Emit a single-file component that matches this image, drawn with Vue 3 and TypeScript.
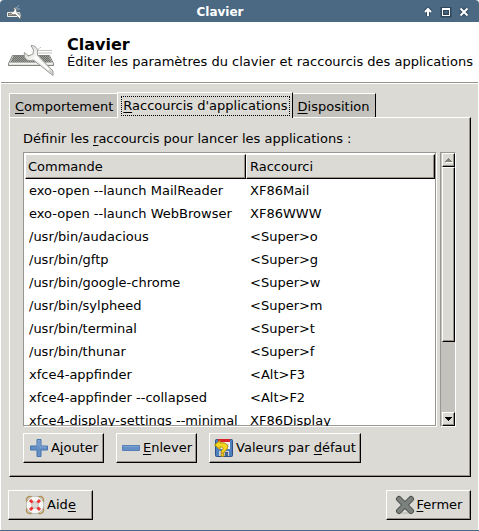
<script setup lang="ts">
import { ref } from 'vue'

interface Shortcut {
  command: string
  keys: string
}

interface Tab {
  id: string
  key: string
  rest: string
}

const tabs: Tab[] = [
  { id: 'behaviour', key: 'C', rest: 'omportement' },
  { id: 'shortcuts', key: 'R', rest: "accourcis d'applications" },
  { id: 'layout', key: 'D', rest: 'isposition' },
]

const activeTab = ref('shortcuts')

const shortcuts: Shortcut[] = [
  { command: 'exo-open --launch MailReader', keys: 'XF86Mail' },
  { command: 'exo-open --launch WebBrowser', keys: 'XF86WWW' },
  { command: '/usr/bin/audacious', keys: '<Super>o' },
  { command: '/usr/bin/gftp', keys: '<Super>g' },
  { command: '/usr/bin/google-chrome', keys: '<Super>w' },
  { command: '/usr/bin/sylpheed', keys: '<Super>m' },
  { command: '/usr/bin/terminal', keys: '<Super>t' },
  { command: '/usr/bin/thunar', keys: '<Super>f' },
  { command: 'xfce4-appfinder', keys: '<Alt>F3' },
  { command: 'xfce4-appfinder --collapsed', keys: '<Alt>F2' },
  { command: 'xfce4-display-settings --minimal', keys: 'XF86Display' },
]
</script>

<template>
  <div class="window">
    <header class="titlebar">
      <svg class="title-icon" viewBox="0 0 16 16" aria-hidden="true">
        <path d="M1.500 8.500h12l1 4h-13z" fill="#77756e" stroke="#eeeeea" />
        <path d="M3 10.500h9" stroke="#b4b3ac" />
        <path d="M9 4c2 0 2-1 4-2.500M10 5h4" fill="none" stroke="#9fb0be" />
        <path d="M7 3.500l3 1 1 4 3.500 3.500v3.500l-5-5-3.500 0-2-3.500 3 1 1.500-2z" fill="#fff" stroke="#4c4a44" stroke-width="0.500" />
      </svg>
      <span class="title">Clavier</span>
      <div class="window-buttons">
        <button type="button" aria-label="Enrouler">
          <svg viewBox="0 0 12 12"><path class="halo" d="M6 10V3M3 6l3-3 3 3" /><path class="glyph" d="M6 10V3M3 6l3-3 3 3" /></svg>
        </button>
        <button type="button" aria-label="Agrandir">
          <svg viewBox="0 0 12 12"><path class="halo" d="M2.500 3h7v6.500h-7z" /><path class="frame" d="M2 2h8v8H2zM3 4v5h6V4z" /></svg>
        </button>
        <button type="button" aria-label="Fermer la fenêtre">
          <svg viewBox="0 0 12 12"><path class="halo" d="M2.500 2.500l7 7M9.500 2.500l-7 7" /><path class="glyph" d="M2.500 2.500l7 7M9.500 2.500l-7 7" /></svg>
        </button>
      </div>
    </header>

    <section class="heading">
      <svg class="heading-icon" viewBox="0 -14 48 48" aria-hidden="true">
        <defs>
          <pattern id="keys" width="2" height="2" patternUnits="userSpaceOnUse">
            <rect width="2" height="2" fill="#6e706c" />
            <rect width="1" height="1" fill="#a2a49f" />
            <rect x="1" y="1" width="1" height="1" fill="#979994" />
          </pattern>
          <linearGradient id="steel" x1="0" y1="0" x2="1" y2="1">
            <stop offset="0" stop-color="#cfd0cc" />
            <stop offset="0.4" stop-color="#f7f7f5" />
            <stop offset="1" stop-color="#cfd0cc" />
          </linearGradient>
        </defs>
        <path d="M4.500 12.500h37l4 8v2h-45v-2z" fill="#e4e5e1" stroke="#80827e" />
        <path d="M5.500 13h35.500l3 6.500H2z" fill="url(#keys)" />
        <path d="M2 20.500h42" stroke="#f4f4f2" />
        <path d="M28 6.500c3 1 3-2.500 5-2M30 7.500h14M30 10h14" fill="none" stroke="#c2c3bf" />
        <path d="M23 2.500c4-.5 7 3 6.500 7l0 2.500L45 28v4.500L26 17.500c-1.500-1-3 .5-5 0-3.500-.5-5.500-4-4.500-8l4 3.500 4.500-2 .5-4z" fill="url(#steel)" stroke="#9b9c98" />
        <path d="M27 14l14 13" fill="none" stroke="#fff" stroke-width="2" />
      </svg>
      <div class="heading-text">
        <h1>Clavier</h1>
        <p>Éditer les paramètres du clavier et raccourcis des applications</p>
      </div>
    </section>

    <main class="body">
      <nav class="tabs" role="tablist">
        <button
          v-for="tab in tabs"
          :key="tab.id"
          type="button"
          role="tab"
          class="tab"
          :class="{ active: tab.id === activeTab }"
          :aria-selected="tab.id === activeTab"
          @click="activeTab = tab.id"
        >
          <span class="tab-label"><u>{{ tab.key }}</u>{{ tab.rest }}</span>
        </button>
      </nav>

      <section class="panel">
        <p class="caption">Définir les <u>r</u>accourcis pour lancer les applications :</p>

        <div class="list">
          <div class="list-view">
            <table>
              <thead>
                <tr>
                  <th class="command">Commande</th>
                  <th>Raccourci</th>
                </tr>
              </thead>
              <tbody>
                <tr v-for="item in shortcuts" :key="item.command">
                  <td>{{ item.command }}</td>
                  <td>{{ item.keys }}</td>
                </tr>
              </tbody>
            </table>
          </div>
          <div class="scrollbar">
            <button type="button" class="step" aria-label="Défiler vers le haut" disabled>
              <svg viewBox="0 0 9 6"><path d="M2 5h7v1H2z" fill="#fff" /><path d="M4 1h1v1h1v1h1v1h1v1H1V4h1V3h1V2h1z" fill="#85827c" /></svg>
            </button>
            <div class="thumb"></div>
            <div class="trough"></div>
            <button type="button" class="step" aria-label="Défiler vers le bas">
              <svg viewBox="0 0 9 6"><path d="M1 1h7v1H7v1H6v1H5v1H4V4H3V3H2V2H1z" fill="#000" /></svg>
            </button>
          </div>
        </div>

        <div class="actions">
          <button type="button" class="button">
            <svg class="icon" viewBox="0 0 20 20" aria-hidden="true">
              <path d="M8 1.500h4v6.500h6.500v4H12v6.500H8V12H1.500V8H8z" fill="#6490c6" stroke="#4473ad" />
              <path d="M9 8.500v-6h2v6.500h6.500" fill="none" stroke="#82a6d4" />
            </svg>
            <span>A<u>j</u>outer</span>
          </button>
          <button type="button" class="button">
            <svg class="icon" viewBox="0 0 20 20" aria-hidden="true">
              <path d="M1.500 7.500h17v5h-17z" fill="#6490c6" stroke="#5580b8" />
              <path d="M2.500 8.500h15" stroke="#7da2d2" />
            </svg>
            <span><u>E</u>nlever</span>
          </button>
          <button type="button" class="button">
            <svg class="icon" viewBox="0 0 20 20" aria-hidden="true">
              <rect x="1.500" y="1.500" width="17" height="17" rx="1" fill="#4f7fbd" stroke="#2d5288" />
              <path d="M4 2h12v9H4z" fill="#f4f4f6" />
              <path d="M4 1h12v3H4z" fill="#d8222a" />
              <path d="M6 6.500h9M6 8.500h9" stroke="#c5c8ce" />
              <path d="M5 13h10v5H5z" fill="#c9ced6" />
              <path d="M11 14h3v4h-3z" fill="#46658f" />
              <path d="M.500 7 6 2.500v2.500c6-1 9 2 7 6-1 2-3 2-3 4H7c0-3 2-3 2-4.500S8 9 6 9v2.500z" fill="#f4d51f" stroke="#b08b08" />
              <circle cx="8.500" cy="17" r="1.500" fill="#f4d51f" stroke="#b08b08" />
            </svg>
            <span>Valeurs par <u>d</u>éfaut</span>
          </button>
        </div>
      </section>

      <footer class="footer">
        <button type="button" class="button">
          <svg class="icon" viewBox="0 0 20 20" aria-hidden="true">
            <path d="M7 2C3 .500.500 3 2 7M13 2c4-1.500 6.500 1 5 5M7 18c-4 1.500-6.500-1-5-5M13 18c4 1.500 6.500-1 5-5" fill="none" stroke="#b39255" stroke-width="1.500" />
            <circle cx="10" cy="10" r="6" fill="none" stroke="#9d9d99" stroke-width="6" />
            <circle cx="10" cy="10" r="6" fill="none" stroke="#f6f6f4" stroke-width="5" />
            <path d="M5 5l2.500 2.500M15 5l-2.500 2.500M5 15l2.500-2.500M15 15l-2.500-2.500" stroke="#ef3434" stroke-width="3" />
          </svg>
          <span>Aid<u>e</u></span>
        </button>
        <button type="button" class="button">
          <svg class="icon" viewBox="0 0 20 20" aria-hidden="true">
            <ellipse cx="10" cy="18" rx="8" ry="1" fill="#c5c5c0" />
            <path d="M4 4l12 12M16 4L4 16" stroke="#4b504c" stroke-width="6" stroke-linecap="round" />
            <path d="M4 4l12 12M16 4L4 16" stroke="#7b817d" stroke-width="4" stroke-linecap="round" />
          </svg>
          <span><u>F</u>ermer</span>
        </button>
      </footer>
    </main>
  </div>
</template>

<style>
body {
  margin: 0;
  background: #fff;
}
</style>

<style scoped>
* {
  box-sizing: border-box;
}

.window {
  display: flex;
  flex-direction: column;
  height: 100vh;
  min-height: 400px;
  border-bottom: 1px solid #4b6983;
  font: 13px/16px "DejaVu Sans", sans-serif;
  color: #000;
}

button {
  margin: 0;
  padding: 0;
  border: 0;
  background: none;
  font: inherit;
  color: inherit;
}

u {
  text-decoration: underline;
  text-underline-offset: 2px;
  text-decoration-thickness: 1px;
  text-decoration-skip-ink: none;
}

.titlebar {
  display: flex;
  align-items: center;
  height: 22px;
  padding: 2px 9px 0 6px;
  border-radius: 4px 4px 0 0;
  background: #4b6983;
  color: #fff;
}

.title-icon {
  width: 16px;
  height: 16px;
}

.title {
  flex: 1;
  padding-right: 4px;
  text-align: center;
  font-size: 12px;
  font-weight: bold;
}

.window-buttons {
  display: flex;
  gap: 6px;
}

.window-buttons button,
.window-buttons svg {
  display: block;
  width: 12px;
  height: 12px;
}

.window-buttons path {
  fill: none;
}

.window-buttons .halo {
  stroke: #2f465b;
  stroke-width: 4;
}

.window-buttons .glyph {
  stroke: #fff;
  stroke-width: 2;
}

.window-buttons .frame {
  fill: #fff;
  fill-rule: evenodd;
}

.heading {
  display: flex;
  align-items: center;
  gap: 11px;
  height: 61px;
  margin: 0 1px;
  padding: 2px 0 0 7px;
  border-bottom: 1px solid #9a9187;
  background: #fff;
}

.heading-icon {
  width: 48px;
  height: 48px;
}

h1 {
  margin: 0;
  font-size: 16px;
  line-height: 18px;
}

.heading-text p,
.caption {
  margin: 0;
  white-space: nowrap;
}

.body {
  flex: 1;
  display: flex;
  flex-direction: column;
  min-height: 0;
  margin: 0 1px;
  padding: 8px 7px 10px;
  border-top: 1px solid #fff;
  background: #dbdad5;
}

.tabs {
  display: flex;
  align-items: flex-end;
  padding-left: 1px;
}

.tab {
  height: 24px;
  padding: 3px 4px 0 5px;
  border: solid #fff;
  border-width: 1px 0 0 1px;
  background: #c4c2bd;
  white-space: nowrap;
}

.tab.active {
  position: relative;
  height: 26px;
  margin-bottom: -1px;
  padding: 3px 3px 3px 4px;
  border-right: 1px solid #000;
  background: #dbdad5;
}

.tab.active .tab-label {
  display: block;
  padding: 1px;
  outline: 1px dotted #000;
}

.tab:last-child {
  padding-right: 5px;
  border-right: 1px solid #000;
  border-left: 0;
}

.panel {
  flex: 1;
  display: flex;
  flex-direction: column;
  min-height: 0;
  margin: 0 0 13px 1px;
  padding: 13px 14px 13px 13px;
  border: 1px solid;
  border-color: #fff #000 #000 #fff;
  box-shadow: inset -1px -1px #9a9187;
}

.list {
  flex: 1;
  display: flex;
  gap: 3px;
  min-height: 0;
  margin: 5px 0 6px;
}

.list-view {
  flex: 1;
  overflow: hidden;
  padding: 1px;
  border: 1px solid;
  border-color: #9a9791 #fff #fff #9a9791;
  background: #fff;
  box-shadow: inset -1px -1px #9a9791;
}

table {
  width: 100%;
  table-layout: fixed;
  border-collapse: separate;
  border-spacing: 0;
}

th {
  height: 25px;
  padding: 0 3px;
  border: 1px solid;
  border-color: #fff #000 #000 #fff;
  background: #dbdad5;
  box-shadow: inset -1px -1px #9a9187;
  text-align: left;
  font-weight: normal;
}

th.command {
  width: 221px;
  padding-left: 2px;
}

td {
  height: 23px;
  padding: 0 4px;
  white-space: nowrap;
}

.scrollbar {
  display: flex;
  flex-direction: column;
  width: 16px;
  padding: 0 0 0 1px;
  border: 1px solid;
  border-color: #9a9791 #fff #fff #9a9791;
  background: #c4c2bd;
}

.step,
.thumb {
  border: 1px solid;
  border-color: #fff #000 #000 #fff;
  background: #dbdad5;
  box-shadow: inset -1px -1px #9a9187;
}

.step {
  display: flex;
  align-items: center;
  justify-content: center;
  height: 14px;
}

.step svg {
  width: 9px;
  height: 6px;
}

.thumb {
  flex: 71;
}

.trough {
  flex: 29;
}

.actions {
  display: flex;
  gap: 12px;
}

.button {
  display: flex;
  align-items: center;
  justify-content: center;
  gap: 2px;
  min-width: 81px;
  height: 30px;
  padding: 0 4px;
  border: 1px solid;
  border-color: #fff #000 #000 #fff;
  background: #dbdad5;
  box-shadow: inset -1px -1px #9a9187;
  white-space: nowrap;
}

.icon {
  width: 20px;
  height: 20px;
}

.footer {
  display: flex;
  justify-content: space-between;
}

.footer .button {
  min-width: 85px;
}
</style>
